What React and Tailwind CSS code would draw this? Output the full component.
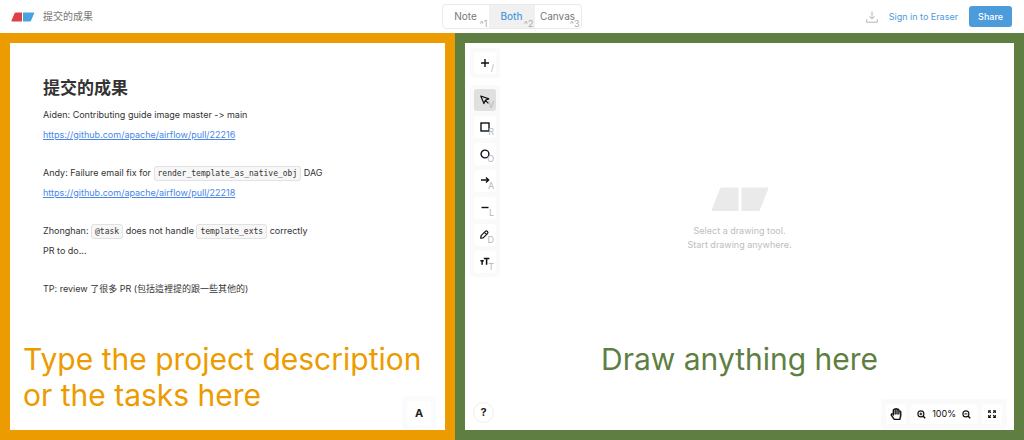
import React from "react";
import { FaRegHandPaper } from "react-icons/fa";

const modes = [
  { name: "Note", hint: "^1" },
  { name: "Both", hint: "^2" },
  { name: "Canvas", hint: "^3" },
];

function Icon({ children, className = "size-3" }) {
  return (
    <svg
      viewBox="0 0 12 12"
      className={className}
      fill="none"
      stroke="currentColor"
      strokeWidth="1.4"
      aria-hidden="true"
    >
      {children}
    </svg>
  );
}

const drawingTools = [
  {
    label: "Select",
    hint: "V",
    active: true,
    icon: <path d="M1.8 2 9.8 4.9 6.4 6.3 4.9 9.6ZM6.4 6.4 9.4 9.4" strokeWidth="1.2" strokeLinejoin="round" />,
  },
  { label: "Rectangle", hint: "R", icon: <rect x="2" y="2" width="8" height="8" /> },
  { label: "Ellipse", hint: "O", icon: <circle cx="6" cy="6" r="3.9" /> },
  { label: "Arrow", hint: "A", icon: <path d="M2 5H9.5M7 2.5 9.6 5 7 7.5" /> },
  { label: "Line", hint: "L", icon: <path d="M2.5 5.5H9.5" strokeWidth="1.4" /> },
  {
    label: "Draw",
    hint: "D",
    icon: <path d="M1.7 9.2 2.1 6.7 6.6 2.2Q7.5 1.4 8.4 2.3T8.7 4.3L4.2 8.8ZM5.6 3.4 7.5 5.3" strokeWidth="1.2" strokeLinejoin="round" />,
  },
  {
    label: "Text",
    hint: "T",
    icon: <path d="M4.8 2.6H10.4M7.6 2.6V8.8M1.4 4.8H4.8M3.1 4.8V8.8" strokeWidth="1.5" />,
  },
];

function ToolButton({ label, hint, active, children }) {
  return (
    <button
      type="button"
      aria-label={label}
      className={`relative flex size-[22px] items-center justify-center rounded-[3px] text-[#111] ${
        active ? "bg-[#e0e0e0]" : "bg-white"
      }`}
    >
      <Icon>{children}</Icon>
      <span className="absolute right-[2px] bottom-px text-[9px] leading-[10px] text-[#b3b6bd]">{hint}</span>
    </button>
  );
}

function Code({ children }) {
  return (
    <code className="rounded-[3px] border border-[#e2e2e2] bg-[#f7f7f7] px-[3px] py-[2px] font-['DejaVu_Sans_Mono',monospace] text-[8px] leading-none text-[#333]">
      {children}
    </code>
  );
}

function NoteLink({ href }) {
  return (
    <a href={href} className="text-[#4a86e8] underline">
      {href}
    </a>
  );
}

function Header() {
  return (
    <header className="grid h-[33px] shrink-0 grid-cols-[1fr_auto_1fr] items-center bg-white pr-3 pl-[11px]">
      <div className="flex items-center gap-2">
        <svg viewBox="0 0 24 10" className="h-[10px] w-6" aria-hidden="true">
          <path d="M4.6.5H11V9.5H1Q.1 9.5.5 8.6L3.7 1.1Q4 .5 4.6.5Z" fill="#dc4148" />
          <path d="M12 .5H22.6Q23.5.5 23.1 1.4L19.9 8.9Q19.6 9.5 19 9.5H12Z" fill="#4aa3df" />
        </svg>
        <span className="text-[10px] text-[#777]">提交的成果</span>
      </div>
      <nav aria-label="View mode" className="flex h-[25px] overflow-hidden rounded-[4px] border border-[#eaeaea]">
        {modes.map(({ name, hint }) => (
          <button
            key={name}
            type="button"
            className={`relative flex w-[46px] items-center justify-center text-[10px] ${
              name === "Both" ? "bg-[#f0f0f0] font-medium text-[#4c9bdb]" : "text-[#777]"
            }`}
          >
            {name}
            <span className="absolute right-px bottom-0 text-[9px] leading-[8px] font-normal text-[#aaa]">{hint}</span>
          </button>
        ))}
      </nav>
      <div className="flex items-center justify-end">
        <button type="button" aria-label="Download" className="mr-[11px] text-[#b5b5b5]">
          <Icon>
            <path d="M6 .5V8M3.4 5.4 6 8 8.6 5.4M.7 8.3V11.2H11.3V8.3" strokeWidth="1" />
          </Icon>
        </button>
        <a href="#sign-in" className="mr-[11px] text-[9px] text-[#4c9bdb]">
          Sign in to Eraser
        </a>
        <button type="button" className="h-[21px] rounded-[3px] bg-[#4c9bdb] px-[9px] text-[9px] font-medium text-white">
          Share
        </button>
      </div>
    </header>
  );
}

function NotePane() {
  return (
    <section className="relative flex basis-4/9 flex-col border-[10px] border-[#ec9b00] bg-white pb-[17px]">
      <article className="px-[33px] pt-[34px] text-[9px] leading-5 text-[#333] [font-variant-ligatures:none]">
        <h1 className="text-[17px] leading-[22px] font-bold">提交的成果</h1>
        <div className="mt-[6px] flex flex-col gap-[18px]">
          <div>
            <p>Aiden: Contributing guide image master -&gt; main</p>
            <p><NoteLink href="https://github.com/apache/airflow/pull/22216" /></p>
          </div>
          <div>
            <p>Andy: Failure email fix for <Code>render_template_as_native_obj</Code> DAG</p>
            <p><NoteLink href="https://github.com/apache/airflow/pull/22218" /></p>
          </div>
          <div>
            <p>Zhonghan: <Code>@task</Code> does not handle <Code>template_exts</Code> correctly</p>
            <p>PR to do...</p>
          </div>
          <p>TP: review 了很多 PR (包括這裡提的跟一些其他的)</p>
        </div>
      </article>
      <p className="mt-auto px-[13px] text-[30px] leading-9 text-[#ec9b00]">
        Type the project description
        <br />
        or the tasks here
      </p>
      <div className="absolute right-[9px] bottom-0 rounded-[5px] bg-[#fafbfc] p-[5px]">
        <button type="button" aria-label="Text style" className="flex size-6 items-center justify-center rounded-[3px] bg-white text-[11px] font-bold text-[#222]">
          A
        </button>
      </div>
    </section>
  );
}

function ZoomIcon({ out }) {
  return (
    <Icon className="size-[9px]">
      <circle cx="5.2" cy="5.2" r="4" strokeWidth="1.5" />
      <path d="M8 8 11 11" strokeWidth="2" />
      <path d={out ? "M3.3 5.2H7.1" : "M3.3 5.2H7.1M5.2 3.3V7.1"} />
    </Icon>
  );
}

function CanvasPane() {
  return (
    <section className="relative flex flex-1 flex-col items-center border-[10px] border-[#5e7f41] bg-white pb-[53px]">
      <div className="flex flex-col items-center pt-36 text-center text-[9px] leading-[14px] text-[#bdbdbd]">
        <svg viewBox="0 0 58 24" className="mb-[13px] h-6 w-[58px]" aria-hidden="true">
          <path d="M10.6.5H27.5V24H1.5Q.1 24 .6 22.7L9.1 1.5Q9.5.5 10.6.5Z" fill="#eaeaea" />
          <path d="M30.5.5H56.5Q57.9.5 57.4 1.8L48.9 23Q48.5 24 47.4 24H30.5Z" fill="#eaeaea" />
        </svg>
        <p>Select a drawing tool.</p>
        <p>Start drawing anywhere.</p>
      </div>
      <p className="mt-auto text-[30px] leading-9 text-[#5e7f41]">Draw anything here</p>

      <div className="absolute top-[5px] left-[5px] flex flex-col gap-[7px]">
        <div className="rounded-[4px] bg-[#fafafa] p-1">
          <ToolButton label="Insert" hint="/">
            <path d="M6 2V10M2 6H10" />
          </ToolButton>
        </div>
        <div role="toolbar" aria-label="Drawing tools" className="flex flex-col gap-[5px] rounded-[4px] bg-[#fafafa] p-1">
          {drawingTools.map(({ icon, ...tool }) => (
            <ToolButton key={tool.label} {...tool}>{icon}</ToolButton>
          ))}
        </div>
      </div>
      <button type="button" aria-label="Help" className="absolute bottom-[7px] left-[8px] size-[21px] rounded-full border border-[#eeeeee] bg-white text-[11px] leading-none font-bold text-[#222]">
        ?
      </button>
      <div className="absolute right-[7px] bottom-px flex gap-[5px] rounded-[4px] bg-[#fafafa] p-[5px] text-[#111]">
        <button type="button" aria-label="Pan" className="flex size-5 items-center justify-center rounded-[3px] bg-white">
          <FaRegHandPaper className="size-3" stroke="currentColor" strokeWidth="16" aria-hidden="true" />
        </button>
        <div className="flex h-5 items-center gap-[6px] rounded-[3px] bg-white px-[6px]">
          <button type="button" aria-label="Zoom in"><ZoomIcon /></button>
          <span className="text-[9px]">100%</span>
          <button type="button" aria-label="Zoom out"><ZoomIcon out /></button>
        </div>
        <button type="button" aria-label="Fit to screen" className="flex size-5 items-center justify-center rounded-[3px] bg-white">
          <Icon className="size-[10px]">
            <path d="M2 4.8V2H4.8M7.2 2H10V4.8M10 7.2V10H7.2M4.8 10H2V7.2M2 2 4.6 4.6M10 2 7.4 4.6M10 10 7.4 7.4M2 10 4.6 7.4" strokeWidth="1.3" />
          </Icon>
        </button>
      </div>
    </section>
  );
}

export default function App() {
  return (
    <div className="flex min-h-screen flex-col bg-white font-['Inter','Noto_Sans_CJK_TC',sans-serif]">
      <Header />
      <main className="flex flex-1">
        <NotePane />
        <CanvasPane />
      </main>
    </div>
  );
}
